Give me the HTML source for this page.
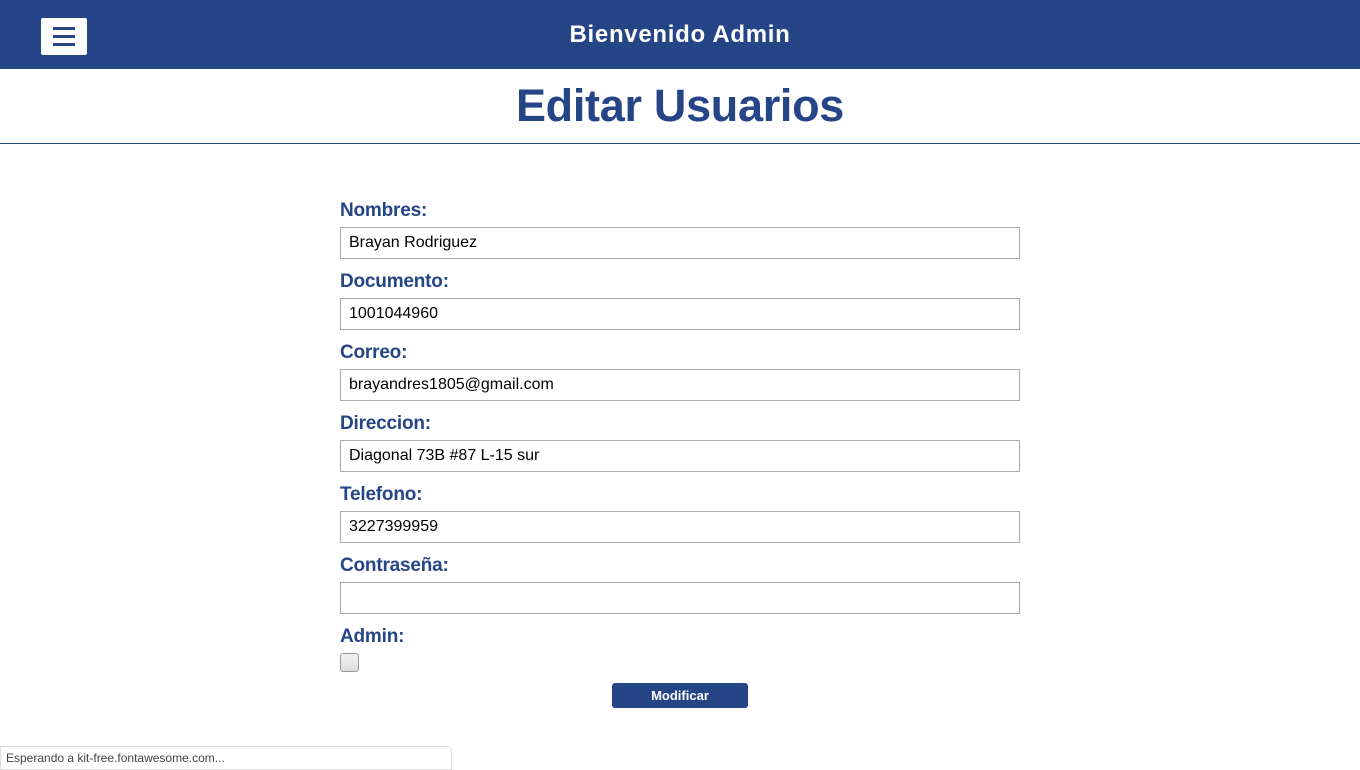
<!DOCTYPE html>
<html><head><meta charset="utf-8"><style>
*{box-sizing:border-box;margin:0;padding:0}
body{width:1360px;height:768px;background:#fff;font-family:"Liberation Sans",sans-serif;position:relative;overflow:hidden}
.hdr{position:absolute;left:0;top:0;width:1360px;height:69px;background:#264587}
.ham{position:absolute;left:41px;top:18px;width:46px;height:37px;background:#fff;border-radius:2px}
.ham i{position:absolute;left:12px;width:22px;height:3px;background:#264587}
.ht{position:absolute;left:0;width:1360px;top:21px;text-align:center;color:#fff;font-weight:bold;font-size:24px;letter-spacing:0.7px}
h1{position:absolute;left:0;width:1360px;top:80px;text-align:center;color:#264587;font-size:45px;font-weight:bold;line-height:52px;letter-spacing:-0.3px}
.line{position:absolute;left:0;top:143px;width:1360px;height:1px;background:#264587}
.lab{position:absolute;left:340px;color:#264587;font-size:19px;font-weight:bold;line-height:22px;letter-spacing:-0.2px}
.in{position:absolute;left:340px;width:680px;height:32px;border:1px solid #a9a9a9;font-size:16px;line-height:30px;padding-left:8px;color:#000}
.cb{position:absolute;left:340px;top:653px;width:19px;height:19px;border:1px solid #999;border-radius:3px;background:linear-gradient(#f2f2f2,#dcdcdc)}
.btn{position:absolute;left:612px;top:683px;width:136px;height:25px;background:#264587;border-radius:3px;color:#fff;font-size:13px;font-weight:bold;text-align:center;line-height:25px}
.st{position:absolute;left:0;top:746px;width:452px;height:24px;border:1px solid #ddd;border-radius:0 4px 0 0;background:#fff;font-size:12px;color:#444;padding:4px 5px}
</style></head><body>
<div class="hdr"><div class="ham"><i style="top:9px"></i><i style="top:17px"></i><i style="top:25px"></i></div><div class="ht">Bienvenido Admin</div></div>
<h1>Editar Usuarios</h1>
<div class="line"></div>
<div class="lab" style="top:200px">Nombres:</div><div class="in" style="top:227px">Brayan Rodriguez</div>
<div class="lab" style="top:271px">Documento:</div><div class="in" style="top:298px">1001044960</div>
<div class="lab" style="top:342px">Correo:</div><div class="in" style="top:369px">brayandres1805@gmail.com</div>
<div class="lab" style="top:413px">Direccion:</div><div class="in" style="top:440px">Diagonal 73B #87 L-15 sur</div>
<div class="lab" style="top:484px">Telefono:</div><div class="in" style="top:511px">3227399959</div>
<div class="lab" style="top:555px">Contraseña:</div><div class="in" style="top:582px"></div>
<div class="lab" style="top:626px">Admin:</div>
<div class="cb"></div>
<div class="btn">Modificar</div>
<div class="st">Esperando a kit-free.fontawesome.com...</div>
</body></html>
